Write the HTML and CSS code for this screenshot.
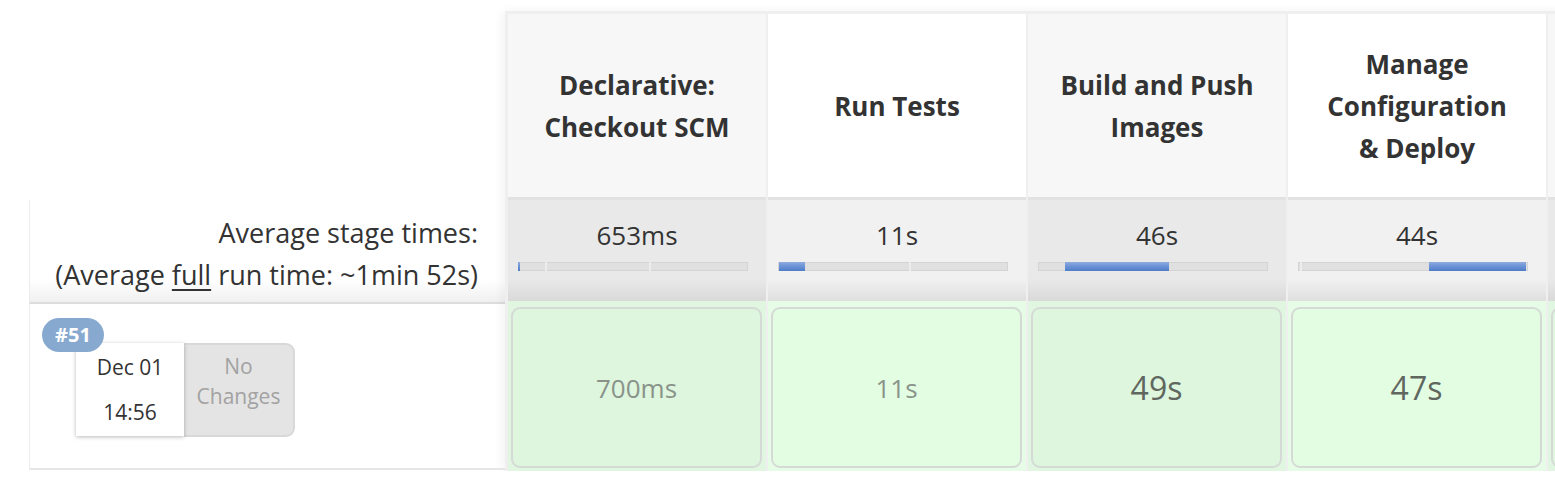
FILE: index.html
```html
<!DOCTYPE html>
<html lang="en">
<head>
<meta charset="utf-8">
<title>Stage View</title>
<link rel="stylesheet" href="styles.css">
</head>
<body>
<div class="stage-view">
  <div class="label-col">
    <div class="label-head"></div>
    <div class="label-avg">
      <div>Average stage times:</div>
      <div>(Average <u>full</u> run time: ~1min 52s)</div>
    </div>
    <div class="label-run">
      <span class="badge">#51</span>
      <div class="date-box">
        <div>Dec 01</div>
        <div>14:56</div>
      </div>
      <div class="changes-box">No<br>Changes</div>
    </div>
  </div>

  <div class="stages">
    <div class="stage odd">
      <div class="stage-head">Declarative: Checkout SCM</div>
      <div class="stage-avg">
        <div class="avg-time">653ms</div>
        <div class="bar">
          <span class="seg cur" style="width:2px"></span>
          <span class="seg" style="width:25px"></span>
          <span class="seg sep" style="width:104px"></span>
          <span class="seg sep" style="width:99px"></span>
        </div>
      </div>
      <div class="stage-run"><div class="run-box">700ms</div></div>
    </div>

    <div class="stage">
      <div class="stage-head">Run Tests</div>
      <div class="stage-avg">
        <div class="avg-time">11s</div>
        <div class="bar">
          <span class="seg" style="width:1px"></span>
          <span class="seg cur" style="width:26px"></span>
          <span class="seg" style="width:104px"></span>
          <span class="seg sep" style="width:99px"></span>
        </div>
      </div>
      <div class="stage-run"><div class="run-box">11s</div></div>
    </div>

    <div class="stage odd">
      <div class="stage-head">Build and Push Images</div>
      <div class="stage-avg">
        <div class="avg-time">46s</div>
        <div class="bar">
          <span class="seg" style="width:2px"></span>
          <span class="seg" style="width:25px"></span>
          <span class="seg cur" style="width:104px"></span>
          <span class="seg" style="width:99px"></span>
        </div>
      </div>
      <div class="stage-run"><div class="run-box long">49s</div></div>
    </div>

    <div class="stage">
      <div class="stage-head">Manage Configuration &amp;&nbsp;Deploy</div>
      <div class="stage-avg">
        <div class="avg-time">44s</div>
        <div class="bar">
          <span class="seg" style="width:2px"></span>
          <span class="seg sep" style="width:25px"></span>
          <span class="seg" style="width:104px"></span>
          <span class="seg cur" style="width:97px"></span>
        </div>
      </div>
      <div class="stage-run"><div class="run-box long">47s</div></div>
    </div>

    <div class="stage odd">
      <div class="stage-head"></div>
      <div class="stage-avg"></div>
      <div class="stage-run"><div class="run-box"></div></div>
    </div>
  </div>
</div>
</body>
</html>
```

FILE: styles.css
```css
html, body {
  margin: 0;
  padding: 0;
  background: #fff;
  overflow: hidden;
}

body {
  font-family: "Open Sans", "Noto Sans", "Liberation Sans", sans-serif;
  color: #333;
}

.stage-view {
  display: flex;
  align-items: flex-start;
  padding: 11px 0 0 29px;
  width: max-content;
}

/* ---------- left label column ---------- */
.label-col {
  width: 476px;
  flex: none;
  display: flex;
  flex-direction: column;
}

.label-head {
  height: 189px;
}

.label-avg {
  height: 104px;
  box-sizing: border-box;
  border-left: 1px solid #ececec;
  border-bottom: 2px solid #dcdcdc;
  background: linear-gradient(to bottom, #ffffff 78%, #f0f0f0 100%);
  text-align: right;
  padding: 12px 27px 0 0;
  font-size: 27px;
  line-height: 42px;
}

.label-avg u {
  text-decoration-thickness: 2px;
  text-underline-offset: 4px;
}

.label-run {
  position: relative;
  height: 166px;
  box-sizing: border-box;
  border-left: 1px solid #ececec;
  border-bottom: 2px solid #e6e6e6;
  padding: 39px 0 0 46px;
  display: flex;
  align-items: flex-start;
}

.badge {
  position: absolute;
  left: 12px;
  top: 14px;
  z-index: 2;
  width: 62px;
  height: 34px;
  border-radius: 17px;
  background: #87a9d0;
  color: #fff;
  font-weight: 700;
  font-size: 20px;
  line-height: 34px;
  text-align: center;
}

.date-box {
  position: relative;
  z-index: 1;
  width: 108px;
  height: 93px;
  background: #fff;
  box-shadow: 0 1px 4px rgba(0, 0, 0, 0.28);
  display: flex;
  flex-direction: column;
  justify-content: center;
  align-items: center;
  font-size: 21px;
  line-height: 45px;
  color: #333;
}

.changes-box {
  width: 111px;
  height: 94px;
  box-sizing: border-box;
  background: #e4e4e4;
  border: 2px solid #d8d8d8;
  border-left: none;
  border-radius: 0 9px 9px 0;
  padding-top: 6px;
  text-align: center;
  font-size: 21px;
  line-height: 30px;
  color: #a2a2a2;
}

/* ---------- stage columns ---------- */
.stages {
  display: flex;
  gap: 2px;
  padding: 3px 0 0 3px;
  background: #efefef;
  box-shadow: -3px 0 10px rgba(0, 0, 0, 0.05);
}

.stage {
  width: 258px;
  flex: none;
  display: flex;
  flex-direction: column;
}

.stage-head {
  height: 183px;
  box-sizing: border-box;
  padding: 0 20px;
  display: flex;
  align-items: center;
  justify-content: center;
  text-align: center;
  font-weight: 700;
  font-size: 26px;
  line-height: 42px;
  color: #333;
  background: #fff;
}

.odd .stage-head {
  background: #f7f7f7;
}

.stage-avg {
  height: 104px;
  box-sizing: border-box;
  border-top: 3px solid #e2e2e2;
  padding-top: 17px;
  display: flex;
  flex-direction: column;
  align-items: flex-start;
  background: linear-gradient(to bottom, #f1f1f1 78%, #dfdfdf 100%);
}

.odd .stage-avg {
  background: linear-gradient(to bottom, #e9e9e9 78%, #d9d9d9 100%);
}

.avg-time {
  align-self: center;
  font-size: 26px;
  line-height: 36px;
  color: #333;
}

.bar {
  margin: 9px 0 0 10px;
  width: 230px;
  height: 9px;
  display: flex;
  background: #e0e0e0;
  box-shadow: inset 0 0 0 1px #d4d4d4;
}

.seg {
  flex: none;
  height: 100%;
  box-sizing: border-box;
}

.seg.sep {
  box-shadow: inset 2px 0 0 #ececec;
}

.seg.cur {
  background: linear-gradient(to bottom, #8eabdd 0%, #6a92d6 50%, #4f7cc8 100%);
}

.stage-run {
  height: 170px;
  box-sizing: border-box;
  padding: 6px 4px 3px 3px;
  background: #e7fce7;
}

.odd .stage-run {
  background: #e0f6e0;
}

.run-box {
  height: 100%;
  box-sizing: border-box;
  border: 2px solid #d6dad6;
  border-radius: 9px;
  background: #e3fde3;
  display: flex;
  align-items: center;
  justify-content: center;
  font-size: 26px;
  color: #8a938a;
}

.odd .run-box {
  background: #ddf6dd;
}

.run-box.long {
  font-size: 32px;
  color: #5f675f;
}
```
